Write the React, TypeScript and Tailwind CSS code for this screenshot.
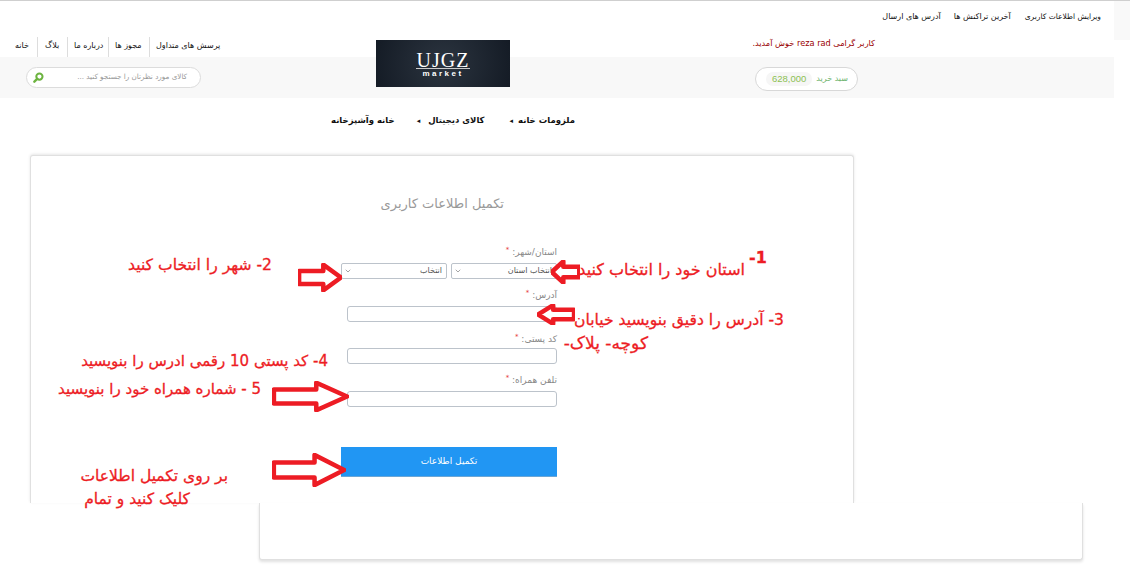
import { ChevronDown } from "lucide-react";

const FA = "font-['Tahoma','DejaVu_Sans','Noto_Sans',sans-serif]";
const NOTE = "absolute text-[#ed1c24] whitespace-nowrap [-webkit-text-stroke:0.3px_#ed1c24]";

function Arrow({ className, points }: { className: string; points: string }) {
  return (
    <svg className={`absolute ${className}`} viewBox="0 0 80 36" preserveAspectRatio="none">
      <polygon points={points} fill="#fff" stroke="#ed1c24" strokeWidth="4.5" strokeLinejoin="round" vectorEffect="non-scaling-stroke" />
    </svg>
  );
}

function Star() {
  return <span className="text-[#e53935] text-[7px] relative -top-[3px]">*</span>;
}

function Field({ label, top, gap }: { label: string; top: string; gap: string }) {
  return (
    <div className={top}>
      <div dir="rtl" className="h-[14px] text-[9px] leading-[14px] text-[#888]">
        {label} <Star />
      </div>
      <div className={`ml-[6px] h-[16px] rounded-[3px] border border-[#bcc3cb] bg-white ${gap}`} />
    </div>
  );
}

function SelectBox({ label, className }: { label: string; className: string }) {
  return (
    <div dir="rtl" className={`h-[16px] rounded-[2px] border border-[#bcc3cb] bg-white flex items-center justify-between px-[2px] text-[8px] text-[#555] ${className}`}>
      <span className="pr-[2px]">{label}</span>
      <ChevronDown size={8} className="text-[#777]" />
    </div>
  );
}

export default function App() {
  return (
    <div className={`relative w-[1130px] h-[568px] overflow-hidden bg-white ${FA}`}>
      <div className="h-[1px] bg-[#cfcfcf]" />

      {/* top links */}
      <div dir="rtl" className="h-[39px] flex pt-[10px] pr-[29px] text-[8px] leading-[12px] text-[#111] relative">
        <span className="text-[7.5px]">ویرایش اطلاعات کاربری</span>
        <span className="mr-[14px]">آخرین تراکنش ها</span>
        <span className="mr-[13px]">آدرس های ارسال</span>
        <div className="absolute top-0 right-0 w-[16px] h-[39px] bg-[#f9f9f9]" />
      </div>

      <div className="h-[17px] w-[1114px] flex justify-between relative">
        <div className="flex pl-[15px] text-[8px] text-[#111] leading-[9px] -mt-[3px]">
          <span dir="rtl" className="w-[22px] pt-[4px] text-left">خانه</span>
          <span dir="rtl" className="border-l border-[#ddd] w-[30px] pl-[7px] pt-[4px] h-[20px] text-left">بلاگ</span>
          <span dir="rtl" className="border-l border-[#ddd] w-[41px] pl-[6px] pt-[4px] h-[20px] text-left">درباره ما</span>
          <span dir="rtl" className="border-l border-[#ddd] w-[41px] pl-[6px] pt-[4px] h-[20px] text-left">مجوز ها</span>
          <span dir="rtl" className="border-l border-[#ddd] pl-[6px] pt-[4px] h-[20px] whitespace-nowrap">پرسش های متداول</span>
        </div>
        <div dir="rtl" className="pr-[239px] text-[8.2px] leading-[9px] -mt-[1px] text-[#990000]">
          کاربر گرامی reza rad خوش آمدید.
        </div>
      </div>

      {/* gray band */}
      <div className="h-[41px] w-[1114px] bg-[#f8f8f8] flex justify-between items-start pt-[10px]">
        <div className="ml-[26px] w-[175px] h-[21px] rounded-full border border-[#dcdcdc] bg-white flex items-center justify-between px-[6px]">
          <svg width="11" height="11" viewBox="0 0 12 12">
            <circle cx="7" cy="5" r="3.4" fill="none" stroke="#6cb33f" strokeWidth="2.2" />
            <path d="M4.5 7.5 1.5 10.5" stroke="#6cb33f" strokeWidth="2.6" strokeLinecap="round" />
          </svg>
          <span dir="rtl" className="text-[7.2px] text-[#999] pr-[7px] whitespace-nowrap">کالای مورد نظرتان را جستجو کنید ...</span>
        </div>
        <div className="mr-[256px] w-[103px] h-[24px] rounded-full border border-[#d8d8d8] bg-white flex items-center pl-[10px] gap-[4px]">
          <span className="rounded-full bg-[#f6f6f6] px-[6px] text-[9.5px] leading-[14px] text-[#8cc152] font-['Liberation_Sans',sans-serif]">628,000</span>
          <span dir="rtl" className="text-[8px] text-[#6cb36c] whitespace-nowrap">سبد خرید</span>
        </div>
      </div>

      {/* logo sits over the band */}
      <div className="absolute left-[376px] top-[40px] w-[134px] h-[47px] bg-[radial-gradient(circle,#2b343f,#141b25)] flex flex-col items-center justify-center text-white pt-[3px]">
        <div className="font-['Liberation_Serif',serif] text-[20px] leading-[16px] tracking-[1px] border-b border-[#ccc] px-[1px]">UJGZ</div>
        <div className="font-['Liberation_Sans',sans-serif] text-[8px] font-bold leading-[10px] tracking-[2.5px]">market</div>
      </div>

      {/* category nav */}
      <div dir="rtl" className="h-[57px] w-[575px] flex items-start pt-[16px] text-[8.5px] font-bold text-[#111]">
        <span>ملزومات خانه</span>
        <span className="text-[7px] leading-[14px] mr-[5px] ml-[25px]">◂</span>
        <span>کالای دیجیتال</span>
        <span className="text-[7px] leading-[14px] mr-[8px] ml-[22px]">◂</span>
        <span>خانه وآشپزخانه</span>
      </div>

      {/* form card */}
      <div className="ml-[30px] w-[824px] h-[348px] bg-white border-x border-t border-[#e0e0e0] rounded-t-[3px] shadow-[0_-1px_3px_rgba(0,0,0,0.1)] flex justify-end pr-[296px]">
        <div className="w-[216px] relative">
          <div dir="rtl" className="absolute top-[38px] right-[53px] text-[13px] text-[#999] whitespace-nowrap">
            تکمیل اطلاعات کاربری
          </div>
          <div className="pt-[89px]">
            <div dir="rtl" className="h-[14px] text-[9px] leading-[14px] text-[#888]">
              استان/شهر: <Star />
            </div>
            <div className="flex justify-between mt-[4px]">
              <SelectBox label="انتخاب" className="w-[106px]" />
              <SelectBox label="انتخاب استان" className="w-[106px]" />
            </div>
          </div>
          <Field label="آدرس:" top="pt-[9px]" gap="mt-[4px]" />
          <Field label="کد پستی:" top="pt-[10px]" gap="mt-[2px]" />
          <Field label="تلفن همراه:" top="pt-[9px]" gap="mt-[4px]" />
          <button className="mt-[40px] w-[216px] h-[30px] bg-[#2196f3] border-b border-[#6aa6d6] text-white text-[9px]">
            تکمیل اطلاعات
          </button>
        </div>
      </div>

      {/* lower card, cut by the annotation layer */}
      <div className="ml-[259px] w-[824px] h-[57px] bg-white border-x border-b border-[#e0e0e0] rounded-b-[3px] shadow-[0_2px_3px_rgba(0,0,0,0.12)]" />

      {/* red annotations over the page */}
      <div className={`${NOTE} left-[749px] top-[246px] text-[16px] font-bold`} dir="rtl">1-</div>
      <div className={`${NOTE} left-[570px] w-[175px] top-[258px] text-[16px]`} dir="rtl">استان خود را انتخاب کنید</div>
      <div className={`${NOTE} left-[100px] w-[172px] top-[254px] text-[15.6px]`} dir="rtl">2- شهر را انتخاب کنید</div>
      <div className={`${NOTE} left-[550px] w-[234px] top-[309px] text-[15.6px]`} dir="rtl">3- آدرس را دقیق بنویسید خیابان</div>
      <div className={`${NOTE} left-[540px] w-[108px] top-[331px] text-[17px]`} dir="rtl">کوچه- پلاک-</div>
      <div className={`${NOTE} left-[60px] w-[268px] top-[350px] text-[15px]`} dir="rtl">4- کد پستی 10 رقمی ادرس را بنویسید</div>
      <div className={`${NOTE} left-[40px] w-[221px] top-[378px] text-[15px]`} dir="rtl">5 - شماره همراه خود را بنویسید</div>
      <div className={`${NOTE} left-[81px] top-[465px] text-[15.5px]`}>
        <div dir="rtl" className="w-[147px]">بر روی تکمیل اطلاعات</div>
        <div dir="rtl" className="w-[109px]">کلیک کنید و تمام</div>
      </div>

      <Arrow className="left-[551px] top-[260px] w-[29px] h-[24px]" points="2,18 34,2 34,10 78,10 78,26 34,26 34,34" />
      <Arrow className="left-[298px] top-[263px] w-[44px] h-[29px]" points="78,18 46,2 46,10 2,10 2,26 46,26 46,34" />
      <Arrow className="left-[537px] top-[304px] w-[38px] h-[21px]" points="2,18 34,2 34,10 78,10 78,26 34,26 34,34" />
      <Arrow className="left-[272px] top-[381px] w-[77px] h-[31px]" points="78,18 46,2 46,10 2,10 2,26 46,26 46,34" />
      <Arrow className="left-[272px] top-[453px] w-[74px] h-[34px]" points="78,18 46,2 46,10 2,10 2,26 46,26 46,34" />
    </div>
  );
}
